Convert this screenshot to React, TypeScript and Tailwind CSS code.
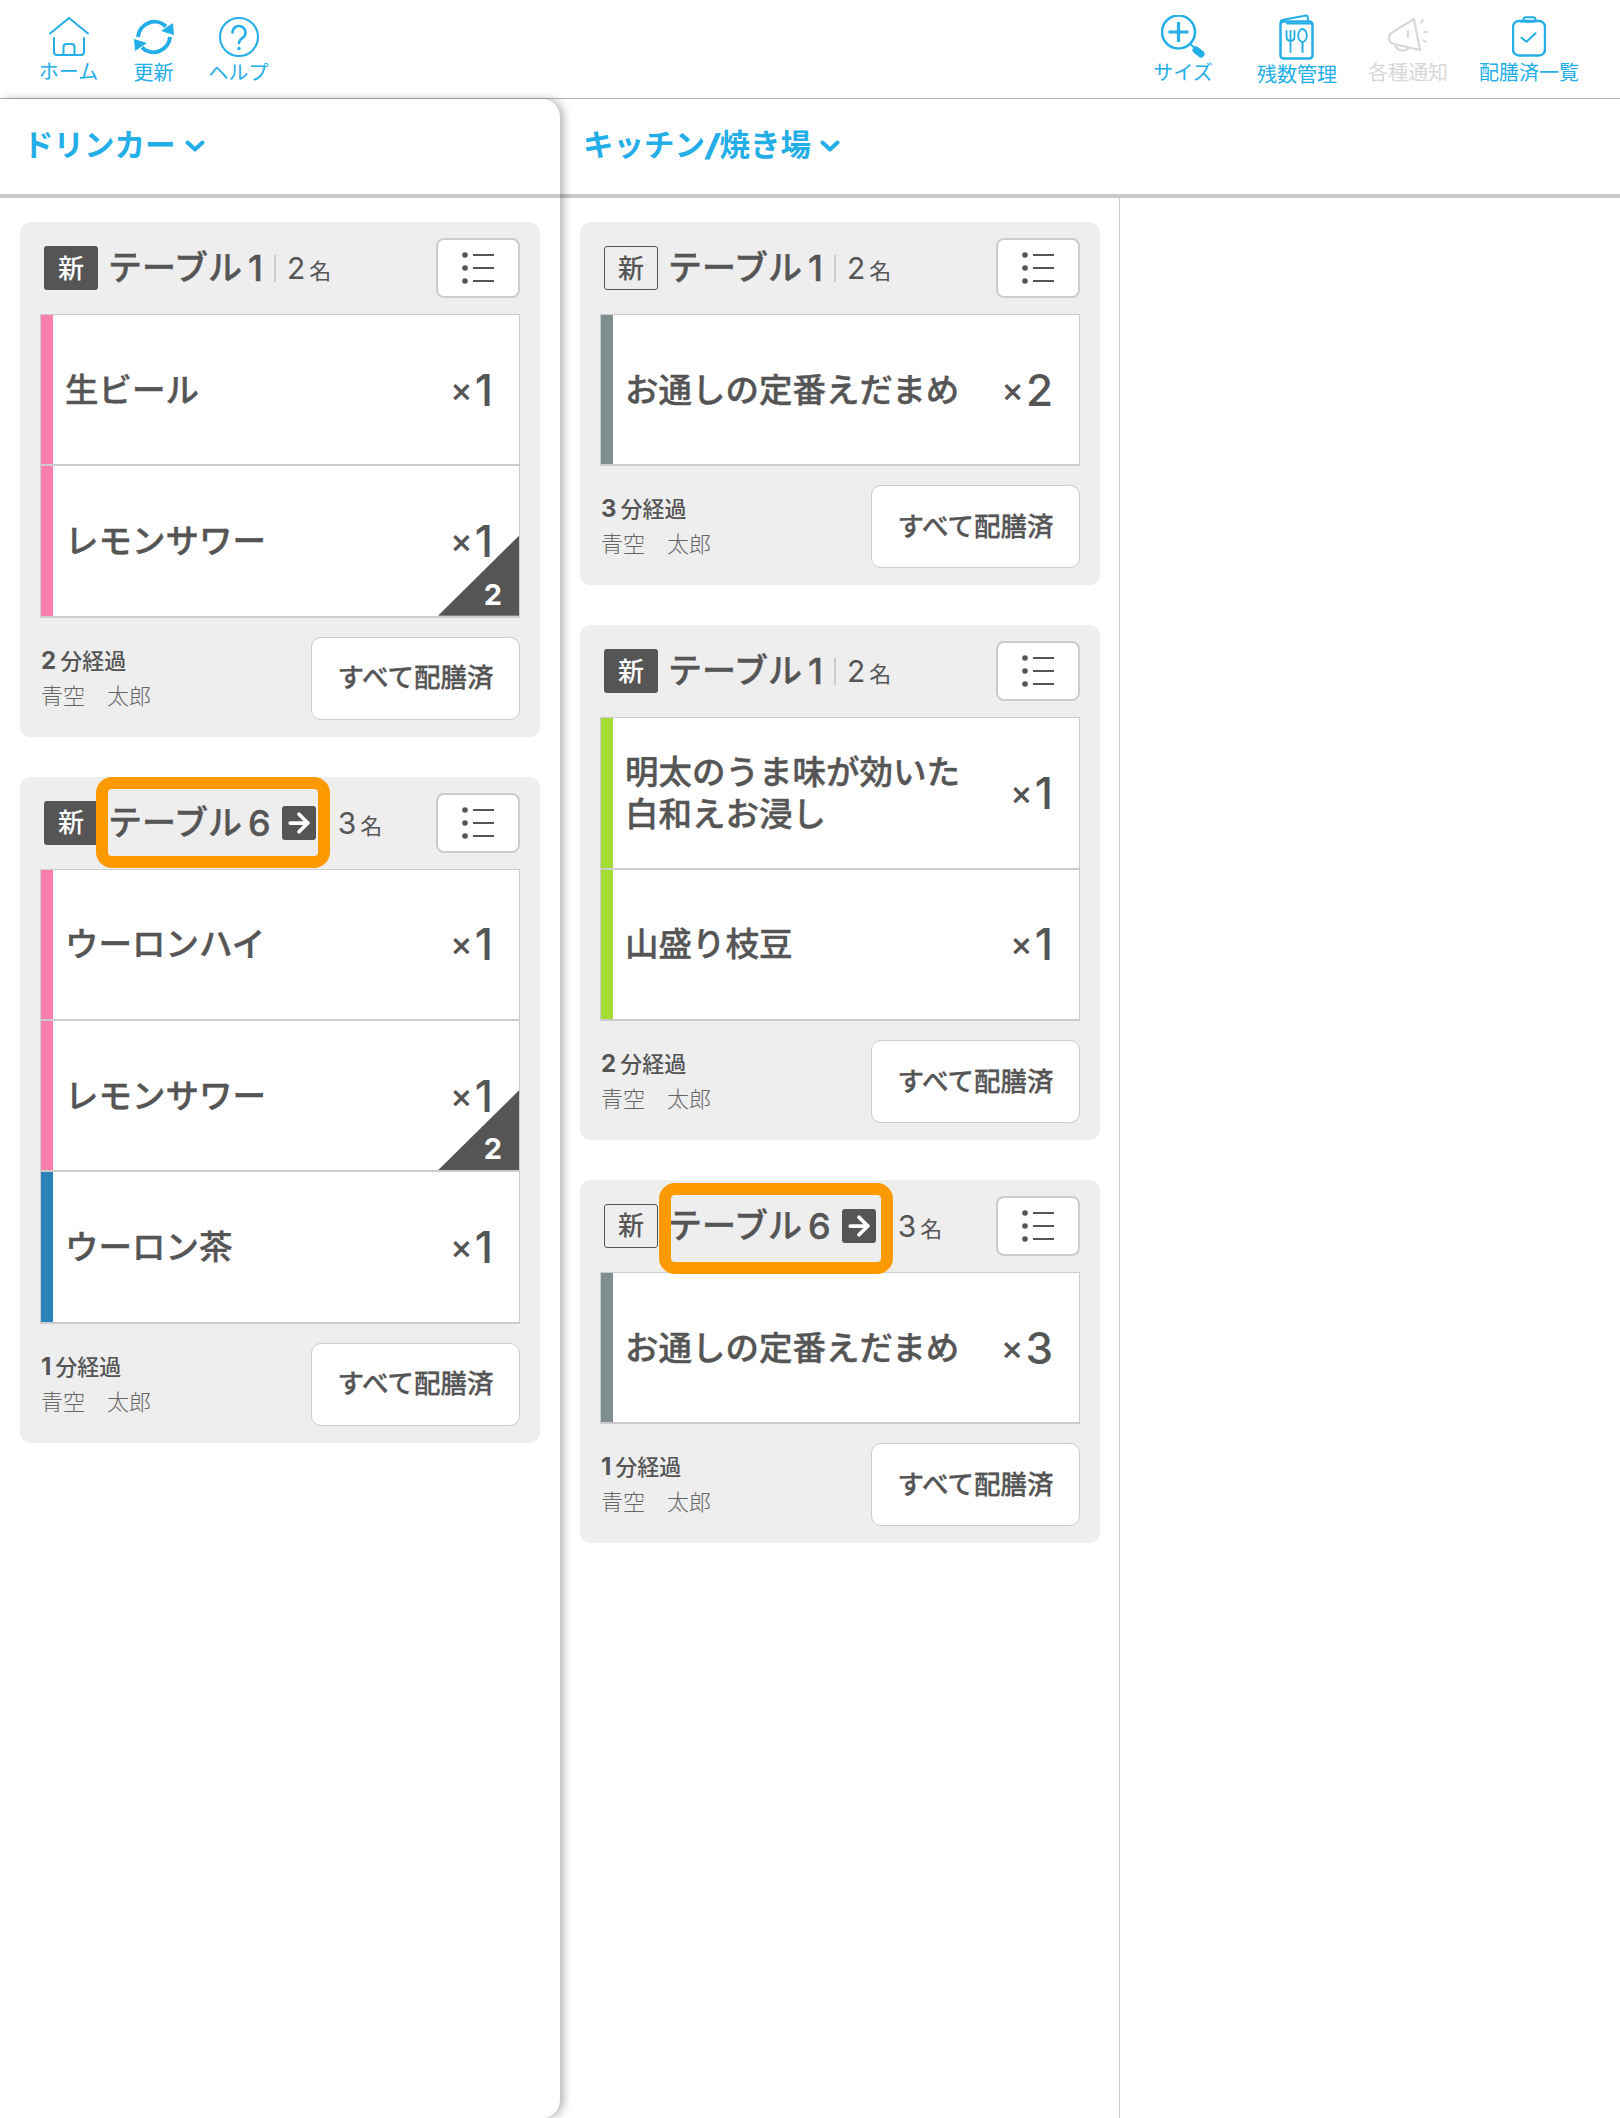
import { ArrowRight } from 'lucide-react';
import type { ReactNode } from 'react';

interface Item {
  name: ReactNode;
  qty: number;
  bar: string;
  corner?: number;
}

interface Order {
  table: number;
  guests: number;
  isNew: boolean;
  moved?: string;
  items: Item[];
  elapsed: number;
}

const PINK = 'bg-[#fb7fae]';
const BLUE = 'bg-[#2a82bb]';
const GREY = 'bg-[#7f8e8e]';
const GREEN = 'bg-[#a4dc33]';

const drinkOrders: Order[] = [
  {
    table: 1,
    guests: 2,
    isNew: true,
    elapsed: 2,
    items: [
      { name: '生ビール', qty: 1, bar: PINK },
      { name: 'レモンサワー', qty: 1, bar: PINK, corner: 2 },
    ],
  },
  {
    table: 6,
    guests: 3,
    isNew: true,
    moved: 'left-[76px] top-0',
    elapsed: 1,
    items: [
      { name: 'ウーロンハイ', qty: 1, bar: PINK },
      { name: 'レモンサワー', qty: 1, bar: PINK, corner: 2 },
      { name: 'ウーロン茶', qty: 1, bar: BLUE },
    ],
  },
];

const kitchenOrders: Order[] = [
  {
    table: 1,
    guests: 2,
    isNew: false,
    elapsed: 3,
    items: [{ name: 'お通しの定番えだまめ', qty: 2, bar: GREY }],
  },
  {
    table: 1,
    guests: 2,
    isNew: true,
    elapsed: 2,
    items: [
      {
        name: (
          <>
            明太のうま味が効いた
            <br />
            白和えお浸し
          </>
        ),
        qty: 1,
        bar: GREEN,
      },
      { name: '山盛り枝豆', qty: 1, bar: GREEN },
    ],
  },
  {
    table: 6,
    guests: 3,
    isNew: false,
    moved: 'left-[79px] top-[3px]',
    elapsed: 1,
    items: [{ name: 'お通しの定番えだまめ', qty: 3, bar: GREY }],
  },
];

function HomeIcon() {
  return (
    <svg width="40" height="40" viewBox="0 0 40 40" fill="none" stroke="currentColor" strokeWidth="2" strokeLinecap="round" strokeLinejoin="round">
      <path d="M1 16.5 20 1l19 15.5" />
      <path d="M5 21v14a3 3 0 0 0 3 3h24a3 3 0 0 0 3-3V21" />
      <path d="M14.5 38v-8a3 3 0 0 1 3-3h5a3 3 0 0 1 3 3v8" />
    </svg>
  );
}

function RefreshIcon() {
  return (
    <svg width="40" height="40" viewBox="0 0 40 40" fill="none" stroke="currentColor" strokeWidth="4">
      <path d="M4 20A16.5 16.5 0 0 1 32 9.5" />
      <path d="M36 20A16.5 16.5 0 0 1 8 30.5" />
      <path d="M27 14 39 6l1 12z" fill="currentColor" stroke="none" />
      <path d="M13 26 1 34 0 22z" fill="currentColor" stroke="none" />
    </svg>
  );
}

function HelpIcon() {
  return (
    <svg width="40" height="40" viewBox="0 0 40 40" fill="none" stroke="currentColor" strokeWidth="2" strokeLinecap="round">
      <circle cx="20" cy="20" r="19" />
      <path d="M13.5 15.5a6.5 6.5 0 1 1 10 5.5c-2.500 1.600-3.500 2.800-3.500 5" strokeWidth="2.500" />
      <circle cx="20" cy="31.500" r="1.700" fill="currentColor" stroke="none" />
    </svg>
  );
}

function SizeIcon() {
  return (
    <svg width="44" height="44" viewBox="0 0 44 44" fill="none" stroke="currentColor" strokeLinecap="round">
      <circle cx="17.500" cy="17" r="16.500" strokeWidth="2.500" />
      <path d="M7.500 17h20M17.500 7v20" strokeWidth="3.200" strokeLinecap="butt" />
      <path d="M29 29l5 4" strokeWidth="2" />
      <path d="M35 35l5 4" strokeWidth="7" />
    </svg>
  );
}

function MenuIcon() {
  return (
    <svg width="36" height="46" viewBox="0 0 36 46" fill="none" stroke="currentColor" strokeLinecap="round" strokeLinejoin="round">
      <rect x="1.500" y="7.500" width="32" height="37" rx="3" strokeWidth="2.500" />
      <path d="M1.500 9c0-2 1-3 3-3.300L27 1.500c1.300 0 1.800 1 1.800 2.500v3.500" strokeWidth="2" />
      <path d="M8 9.500h25" strokeWidth="2" />
      <path d="M7.500 17v5c0 3 1.500 5 4 5s4-2 4-5v-5M11.500 17v21" strokeWidth="1.800" />
      <ellipse cx="23.500" cy="21.500" rx="4.300" ry="6.500" strokeWidth="1.800" />
      <path d="M23.500 28V38" strokeWidth="2" />
    </svg>
  );
}

function MegaphoneIcon() {
  return (
    <svg width="42" height="40" viewBox="0 0 42 40" fill="none" stroke="currentColor" strokeWidth="2.200" strokeLinecap="round" strokeLinejoin="round">
      <path d="M27 2 5 15.500c-5 3.500-3.500 10 2 11.500L33 33z" />
      <path d="M8 27c1 6 8 9 14 4" />
      <path d="M21 14v6" />
      <path d="M34 6l2-3M37 15h3M36 23l3 2" strokeWidth="1.800" />
    </svg>
  );
}

function ClipboardIcon() {
  return (
    <svg width="34" height="42" viewBox="0 0 34 42" fill="none" stroke="currentColor" strokeLinecap="round" strokeLinejoin="round">
      <rect x="1" y="5" width="32" height="34.500" rx="6" strokeWidth="2.400" />
      <path d="M9 5.500h14M11.500 5.500V3.500c0-1.500 1-2.300 2.500-2.300h7c1.500 0 2.500 .8 2.500 2.300 0 1.600-1 2.300-2.500 2.300h-7" strokeWidth="2" />
      <path d="m9.500 21.700 5 4 9-8.400" strokeWidth="2" />
    </svg>
  );
}

function ListIcon() {
  return (
    <svg width="34" height="34" viewBox="0 0 34 34" fill="#555555" stroke="#555555">
      <circle cx="4" cy="4" r="2.800" stroke="none" />
      <circle cx="4" cy="17" r="2.800" stroke="none" />
      <circle cx="4" cy="30" r="2.800" stroke="none" />
      <path d="M12 4h21M12 17h21M12 30h21" strokeWidth="2" />
    </svg>
  );
}

function Chevron() {
  return (
    <svg width="20" height="12" viewBox="0 0 20 12" fill="none" stroke="#23aee8" strokeWidth="4" strokeLinecap="round" strokeLinejoin="round">
      <path d="M2.500 2.500 10 9.500l7.500-7" />
    </svg>
  );
}

function ToolButton({ icon, label, width, labelGap, muted }: { icon: ReactNode; label: string; width: string; labelGap: string; muted?: boolean }) {
  return (
    <div className={`flex flex-col items-center ${width} ${muted ? 'text-[#d8d8d8]' : 'text-[#23aee8]'}`}>
      <div className="h-[45px] flex items-center justify-center">{icon}</div>
      <span className={`text-[20px] leading-[26px] font-normal whitespace-nowrap ${labelGap}`}>{label}</span>
    </div>
  );
}

function OrderRow({ item }: { item: Item }) {
  return (
    <div className="relative flex h-[151.33px] bg-white border-b-2 border-[#cccccc]">
      <div className={`w-[12px] shrink-0 ${item.bar}`} />
      <div className="flex-1 flex items-center pl-[12px] pr-[26px]">
        <span className="flex-1 text-[33.5px] leading-[42px] font-medium text-[#555555] [-webkit-text-stroke:0.4px_#555555]">{item.name}</span>
        <span className="flex items-center font-medium text-[#555555]">
          <span className="text-[34px] leading-none mr-[2px]">×</span>
          <span className="text-[44px] leading-none">{item.qty}</span>
        </span>
      </div>
      {item.corner && (
        <div className="absolute right-0 bottom-0 w-[81px] h-[80px] bg-[#555555] [clip-path:polygon(100%_0,100%_100%,0_100%)]">
          <span className="absolute right-[17px] bottom-[7px] text-[29px] leading-none font-bold text-white">{item.corner}</span>
        </div>
      )}
    </div>
  );
}

function OrderCard({ order }: { order: Order }) {
  return (
    <div className="relative w-[520px] bg-[#eeeeee] rounded-[10px] px-[20px] pt-[16px] pb-[17px]">
      {/* 移動注文の枠 */}
      {order.moved && (
        <div className={`absolute z-10 w-[234px] h-[91px] border-[12px] border-[#ff9900] rounded-[16px] ${order.moved}`} />
      )}

      <div className="flex items-center h-[60px] pl-[4px] text-[#555555]">
        {order.isNew ? (
          <div className="w-[54px] h-[44px] flex items-center justify-center rounded-[3px] bg-[#555555] text-white text-[26px] font-medium">新</div>
        ) : (
          <div className="w-[54px] h-[44px] flex items-center justify-center rounded-[3px] border border-[#555555] text-[26px] font-medium">新</div>
        )}
        <span className="ml-[10px] text-[34px] font-medium leading-none [-webkit-text-stroke:0.4px_#555555]">テーブル</span>
        <span className="ml-[6px] text-[36px] font-medium leading-none [-webkit-text-stroke:0.4px_#555555]">{order.table}</span>
        {order.moved ? (
          <div className="ml-[11px] w-[34px] h-[34px] flex items-center justify-center rounded-[3px] bg-[#555555] text-white">
            <ArrowRight size={30} strokeWidth={3} />
          </div>
        ) : (
          <div className="ml-[11px] w-[2px] h-[27px] bg-[#cccccc]" />
        )}
        <span className={`${order.moved ? 'ml-[22px]' : 'ml-[11px]'} flex items-baseline font-normal`}>
          <span className="text-[30px] leading-none">{order.guests}</span>
          <span className="ml-[4px] text-[22px] leading-none">名</span>
        </span>
        <button className="ml-auto w-[84px] h-[60px] flex items-center justify-center bg-white border-2 border-[#cccccc] rounded-[8px]">
          <ListIcon />
        </button>
      </div>

      <div className="mt-[16px] border-t border-x border-[#cccccc]">
        {order.items.map((item, i) => (
          <OrderRow key={i} item={item} />
        ))}
      </div>

      <div className="mt-[19px] flex items-center justify-between text-[#555555]">
        <div className="pl-[1px]">
          <div className="flex items-baseline leading-[35px] font-medium">
            <span className="text-[24px] font-bold">{order.elapsed}</span>
            <span className="ml-[4px] text-[22px]">分経過</span>
          </div>
          <div className="text-[22px] leading-[35px] text-[#666666] font-light">青空　太郎</div>
        </div>
        <button className="w-[209px] h-[83px] bg-white border border-[#cccccc] rounded-[10px] text-[26.5px] font-medium text-[#555555] [-webkit-text-stroke:0.3px_#555555]">
          すべて配膳済
        </button>
      </div>
    </div>
  );
}

function StationHeader({ title }: { title: ReactNode }) {
  return (
    <div className="h-[99px] flex items-center pl-[23px] pb-[2px] gap-[9px] border-b-4 border-[#c8c8c8]">
      <span className="text-[30.5px] font-bold text-[#23aee8] leading-none">{title}</span>
      <Chevron />
    </div>
  );
}

export default function App() {
  return (
    <div className="w-[1620px] h-[2118px] flex flex-col overflow-hidden bg-white font-['Inter','Noto_Sans_CJK_JP',sans-serif]">
      <header className="h-[99px] shrink-0 flex justify-between items-start pt-[14px] border-b border-[#b3b3b3]">
        <div className="flex pl-[26px]">
          <ToolButton icon={<HomeIcon />} label="ホーム" width="w-[85px]" labelGap="mt-0" />
          <ToolButton icon={<RefreshIcon />} label="更新" width="w-[85px]" labelGap="mt-[1px]" />
          <ToolButton icon={<HelpIcon />} label="ヘルプ" width="w-[85px]" labelGap="mt-[1px]" />
        </div>
        <div className="flex gap-[31px] pr-[41px]">
          <ToolButton icon={<SizeIcon />} label="サイズ" width="w-[86px]" labelGap="mt-[1px]" />
          <ToolButton icon={<MenuIcon />} label="残数管理" width="w-[80px]" labelGap="mt-[3px]" />
          <ToolButton icon={<MegaphoneIcon />} label="各種通知" width="w-[80px]" labelGap="mt-[1px]" muted />
          <ToolButton icon={<ClipboardIcon />} label="配膳済一覧" width="w-[100px]" labelGap="mt-[1px]" />
        </div>
      </header>

      <div className="flex-1 flex">
        <section className="relative z-10 w-[560px] shrink-0 bg-white rounded-r-[18px] shadow-[4px_0_8px_rgba(0,0,0,0.28)]">
          <StationHeader title="ドリンカー" />
          <div className="flex flex-col gap-[40px] px-[20px] pt-[24px]">
            {drinkOrders.map((order, i) => (
              <OrderCard key={i} order={order} />
            ))}
          </div>
        </section>

        <section className="flex-1 flex flex-col">
          <StationHeader
            title={
              <>
                キッチン<span className="mx-[1px] italic font-black">/</span>焼き場
              </>
            }
          />
          <div className="flex-1 w-[560px] flex flex-col gap-[40px] px-[20px] pt-[24px] border-r border-[#cccccc]">
            {kitchenOrders.map((order, i) => (
              <OrderCard key={i} order={order} />
            ))}
          </div>
        </section>
      </div>
    </div>
  );
}
